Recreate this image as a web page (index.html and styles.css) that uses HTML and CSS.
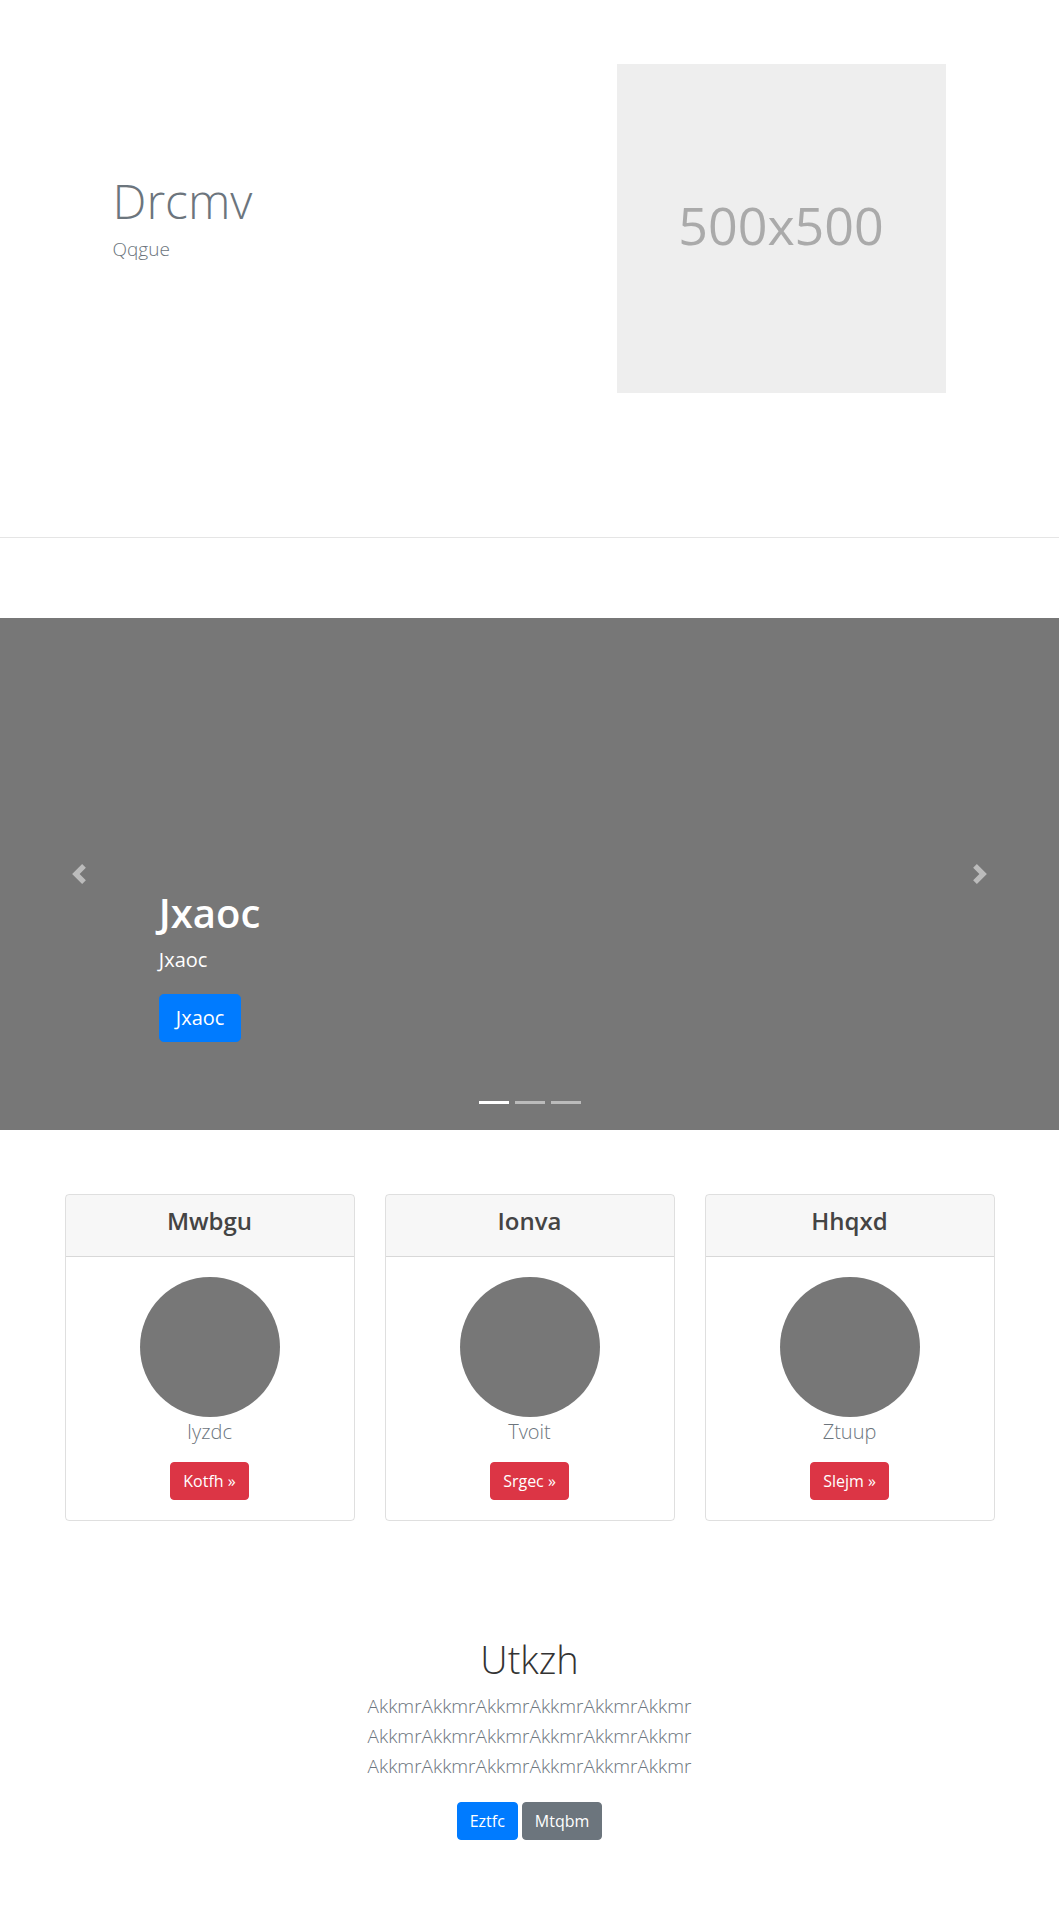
FILE: index.html
```html
<!DOCTYPE html>
<html lang="en">
<head>
<meta charset="utf-8">
<title>Drcmv</title>
<link rel="stylesheet" href="styles.css">
</head>
<body>
<header class="hero">
  <div class="hero-inner">
    <div class="hero-text">
      <h1 class="hero-title">Drcmv</h1>
      <p class="hero-sub">Qqgue</p>
    </div>
    <div class="hero-media">
      <div class="placeholder">500x500</div>
    </div>
  </div>
</header>
<hr class="divider">
<section class="carousel">
  <a class="ctrl ctrl-prev" href="#">
    <svg class="ctrl-icon" viewBox="0 0 8 8" width="20" height="20"><path d="M5.25 0l-4 4 4 4 1.5-1.5-2.5-2.5 2.5-2.5-1.5-1.5z"/></svg>
  </a>
  <div class="caption">
    <h2 class="caption-title">Jxaoc</h2>
    <p class="caption-text">Jxaoc</p>
    <a class="btn btn-lg btn-primary" href="#">Jxaoc</a>
  </div>
  <ol class="indicators">
    <li class="active"></li>
    <li></li>
    <li></li>
  </ol>
  <a class="ctrl ctrl-next" href="#">
    <svg class="ctrl-icon" viewBox="0 0 8 8" width="20" height="20"><path d="M2.75 0l-1.5 1.5 2.5 2.5-2.5 2.5 1.5 1.5 4-4-4-4z"/></svg>
  </a>
</section>
<section class="cards">
  <div class="card">
    <div class="card-header"><h4 class="card-title">Mwbgu</h4></div>
    <div class="card-body">
      <div class="avatar"></div>
      <p class="card-text">Iyzdc</p>
      <a class="btn btn-danger" href="#">Kotfh »</a>
    </div>
  </div>
  <div class="card">
    <div class="card-header"><h4 class="card-title">Ionva</h4></div>
    <div class="card-body">
      <div class="avatar"></div>
      <p class="card-text">Tvoit</p>
      <a class="btn btn-danger" href="#">Srgec »</a>
    </div>
  </div>
  <div class="card">
    <div class="card-header"><h4 class="card-title">Hhqxd</h4></div>
    <div class="card-body">
      <div class="avatar"></div>
      <p class="card-text">Ztuup</p>
      <a class="btn btn-danger" href="#">Slejm »</a>
    </div>
  </div>
</section>
<section class="cta">
  <h2 class="cta-title">Utkzh</h2>
  <p class="cta-text">AkkmrAkkmrAkkmrAkkmrAkkmrAkkmr AkkmrAkkmrAkkmrAkkmrAkkmrAkkmr AkkmrAkkmrAkkmrAkkmrAkkmrAkkmr</p>
  <div class="cta-actions">
    <a class="btn btn-primary" href="#">Eztfc</a>
    <a class="btn btn-secondary" href="#">Mtqbm</a>
  </div>
</section>
</body>
</html>
```
FILE: styles.css
```css
* { box-sizing: border-box; }
html, body { margin: 0; padding: 0; }
body {
  font-family: "Open Sans", "Noto Sans", sans-serif;
  font-size: 16px;
  line-height: 1.5;
  color: #212529;
  background: #fff;
  width: 1059px;
  min-height: 1920px;
}

/* hero */
.hero { padding: 64px 0 144px; }
.hero-inner {
  width: 960px;
  margin: 0 auto;
  display: flex;
  align-items: center;
}
.hero-text {
  width: 480px;
  padding-left: 63px;
  margin-bottom: 22px;
}
.hero-title {
  margin: 0;
  font-size: 48px;
  font-weight: 300;
  line-height: 60px;
  color: #6c757d;
}
.hero-sub {
  margin: 3px 0 0;
  font-size: 19px;
  font-weight: 300;
  line-height: 30px;
  color: #6c757d;
}
.hero-media {
  width: 480px;
  display: flex;
  justify-content: flex-end;
  padding-right: 64px;
}
.placeholder {
  width: 329px;
  height: 329px;
  padding-bottom: 8px;
  background: #eee;
  color: #aaa;
  font-size: 52px;
  display: flex;
  align-items: center;
  justify-content: center;
}

.divider {
  margin: 0;
  border: 0;
  border-top: 1px solid rgba(0,0,0,.1);
}

/* carousel */
.carousel {
  margin-top: 80px;
  height: 512px;
  background: #777;
  display: grid;
  grid-template-columns: 15% 1fr 15%;
  grid-template-rows: 1fr auto;
}
.ctrl {
  grid-row: 1 / 3;
  display: flex;
  align-items: center;
  justify-content: center;
  opacity: .5;
}
.ctrl-prev { grid-column: 1; }
.ctrl-next { grid-column: 3; }
.ctrl-icon { display: block; fill: #fff; }
.caption {
  grid-column: 2;
  grid-row: 1;
  align-self: end;
  display: flex;
  flex-direction: column;
  align-items: flex-start;
  padding-bottom: 59px;
  color: #fff;
}
.caption-title {
  margin: 0 0 8px;
  font-size: 40px;
  font-weight: 600;
  line-height: 1.2;
}
.caption-text {
  margin: 0 0 19px;
  font-size: 20px;
  line-height: 1.5;
}
.indicators {
  grid-column: 2;
  grid-row: 2;
  list-style: none;
  margin: 0 0 26px;
  padding: 0;
  display: flex;
  justify-content: center;
}
.indicators li {
  width: 30px;
  height: 3px;
  margin: 0 3px;
  background: rgba(255,255,255,.5);
}
.indicators li.active { background: #fff; }

/* buttons */
.btn {
  display: inline-block;
  padding: 6px 12px;
  font-size: 16px;
  line-height: 24px;
  border: 1px solid transparent;
  border-radius: 4px;
  color: #fff;
  text-decoration: none;
  text-align: center;
}
.btn-lg {
  padding: 8px 16px;
  font-size: 20px;
  line-height: 30px;
  border-radius: 4.8px;
}
.btn-primary { background: #007bff; border-color: #007bff; }
.btn-danger { background: #dc3545; border-color: #dc3545; }
.btn-secondary { background: #6c757d; border-color: #6c757d; }

/* cards */
.cards {
  width: 930px;
  margin: 64px auto 0;
  display: grid;
  grid-template-columns: repeat(3, 290px);
  column-gap: 30px;
}
.card {
  border: 1px solid rgba(0,0,0,.125);
  border-radius: 4px;
  text-align: center;
  overflow: hidden;
}
.card-header {
  padding: 12px 20px;
  background: rgba(0,0,0,.03);
  border-bottom: 1px solid rgba(0,0,0,.125);
}
.card-title {
  margin: 0 0 8px;
  font-size: 24px;
  font-weight: 600;
  line-height: 1.2;
  color: #444;
}
.card-body {
  padding: 20px;
  display: flex;
  flex-direction: column;
  align-items: center;
}
.avatar {
  width: 140px;
  height: 140px;
  border-radius: 50%;
  background: #777;
}
.card-text {
  margin: 0 0 15px;
  font-size: 20px;
  font-weight: 300;
  line-height: 1.5;
  color: #6c757d;
}

/* cta */
.cta {
  margin-top: 114px;
  text-align: center;
}
.cta-title {
  margin: 0 0 8px;
  font-size: 38px;
  font-weight: 300;
  line-height: 48px;
  color: #333;
}
.cta-text {
  width: 360px;
  margin: 0 auto 21px;
  font-size: 19px;
  font-weight: 300;
  line-height: 30px;
  color: #6c757d;
}
.cta-actions { display: flex; justify-content: center; gap: 4px; }
```
